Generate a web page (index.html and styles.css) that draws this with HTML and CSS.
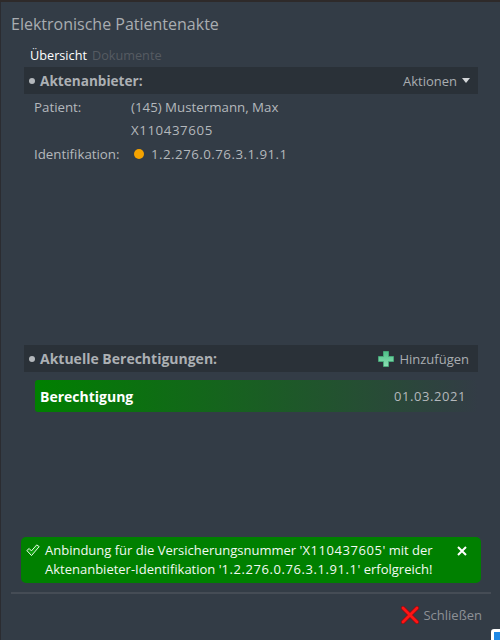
FILE: index.html
```html
<!DOCTYPE html>
<html lang="de">
<head>
<meta charset="utf-8">
<title>Elektronische Patientenakte</title>
<link rel="stylesheet" href="styles.css">
</head>
<body>
<div class="dialog">
  <h1 class="title">Elektronische Patientenakte</h1>
  <div class="tabs"><span class="tab active">Übersicht</span><span class="tab">Dokumente</span></div>
  <div class="section-bar">
    <span class="section-title"><i class="bullet"></i>Aktenanbieter:</span>
    <span class="action">Aktionen<i class="caret"></i></span>
  </div>
  <div class="info">
    <span class="label">Patient:</span><span>(145) Mustermann, Max</span>
    <span></span><span class="num">X110437605</span>
    <span class="label">Identifikation:</span><span class="ident"><i class="dot"></i><span class="num tight">1.2.276.0.76.3.1.91.1</span></span>
  </div>
  <div class="section-bar second">
    <span class="section-title wide"><i class="bullet"></i>Aktuelle Berechtigungen:</span>
    <span class="action add">
      <svg class="plus" viewBox="0 0 16 16" width="16" height="16"><defs><linearGradient id="plusfill" x1="0" y1="0" x2="0" y2="1"><stop offset="0" stop-color="#4fc088"/><stop offset="1" stop-color="#8ce0b4"/></linearGradient></defs><path d="M5.500 .5h5v5h5v5h-5v5h-5v-5h-5v-5h5z" fill="url(#plusfill)" stroke="#46b07c" stroke-width=".8"/></svg>
      Hinzufügen</span>
  </div>
  <div class="grant"><strong>Berechtigung</strong><span class="grant-date num">01.03.2021</span></div>
  <div class="notice">
    <svg class="check" viewBox="0 0 14 12" width="14" height="12"><path d="M.8 6.500l2.400-2 2.200 2.400 5.300-6 2.500 1.700-7.700 9z" fill="#0da00d" stroke="#e6fae6" stroke-width="1"/></svg>
    <p>Anbindung für die Versicherungsnummer '<span class="num">X110437605</span>' mit der<br>Aktenanbieter-Identifikation '<span class="num">1.2.276.0.76.3.1.91.1</span>' erfolgreich!</p>
    <svg class="close" viewBox="0 0 10 10" width="10" height="10"><path d="M1 1l8 8M9 1l-8 8" stroke="#fff" stroke-width="2"/></svg>
  </div>
  <div class="rule"></div>
  <div class="footer">
    <svg class="cross" viewBox="0 0 18 18" width="18" height="18"><path d="M2 2l14 14M16 2L2 16" stroke="#8a1016" stroke-width="4.400" stroke-linecap="round"/><path d="M2 2l14 14M16 2L2 16" stroke="#ff1414" stroke-width="2.800" stroke-linecap="round"/></svg>
    <span>Schließen</span>
  </div>
  <div class="corner-badge"></div>
</div>
</body>
</html>
```
FILE: styles.css
```css
* { box-sizing: border-box; }
html, body { margin: 0; height: 100%; }
body { background: #333b45; overflow: hidden; }
i { display: inline-block; }
.dialog {
  position: relative;
  width: 500px; height: 640px;
  padding: 2px 0 0;
  background:
    linear-gradient(#2e2a2a 0 2px, transparent 2px),
    linear-gradient(90deg, #2b2c31 0 1px, transparent 1px),
    #333c46;
  font-family: "Open Sans", sans-serif;
  font-size: 13px;
  color: #b4b8bc;
  display: flex; flex-direction: column;
}
.num { letter-spacing: .57px; }
.num.tight { letter-spacing: .47px; }
.title { margin: 11px 0 0 11px; font-size: 16px; line-height: 22px; font-weight: 400; color: #a9adb1; }
.tabs { margin: 11px 0 0 30px; display: flex; gap: 5px; line-height: 18px; font-size: 12.700px; height: 18px; }
.tab { color: #565b62; }
.tab.active { color: #fff; }
.section-bar {
  margin: 3px 22px 0 24px; height: 27px; padding: 0 8px 0 5px;
  background: #2a3138;
  display: flex; justify-content: space-between; align-items: center;
}
.section-bar.second { margin-top: 180px; }
.section-title { font-weight: 700; font-size: 13.600px; color: #acb0b4; display: flex; align-items: center; }
.section-title.wide { font-size: 14px; }
.bullet { width: 6px; height: 6px; border-radius: 50%; background: #b4b8bc; margin-right: 5px; margin-top: 1px; }
.action { display: flex; align-items: center; color: #a9adb1; }
.caret { margin-left: 5px; border: 4px solid transparent; border-top: 5px solid #d4d6d8; border-bottom: 0; }
.add { gap: 5px; padding-right: 1px; }
.info {
  margin: 1px 0 0 34px; display: grid; grid-template-columns: 97px auto; justify-content: start;
  grid-template-rows: 23px 24px 23px; align-items: center; font-size: 13.300px;
}
.ident { display: flex; align-items: center; margin-left: 3px; }
.dot { width: 10px; height: 10px; border-radius: 50%; background: #f5a300; margin-right: 7px; }
.grant {
  margin: 8px 22px 0 35px; height: 32px; padding: 0 12px 0 5px; border-radius: 3px;
  background: linear-gradient(90deg, #008000, #333c46);
  display: flex; justify-content: space-between; align-items: center;
}
.grant strong { color: #fff; font-size: 14px; }
.grant-date { color: #b4b8bc; font-size: 13px; }
.notice {
  margin: 125px 19px 0 21px; height: 46px; padding: 4px 14px 0 5px; border-radius: 5px;
  background: #008000; color: #f2f9f2;
  display: flex; align-items: flex-start;
}
.notice p { margin: 0; flex: 1; font-size: 13px; line-height: 19px; margin-left: 5px; }
.check { margin-top: 3px; flex: none; }
.close { margin-top: 5px; flex: none; }
.rule { margin: 9px 9px 0 11px; height: 2px; background: #454c55; }
.footer { margin: 12px 18px 0 0; display: flex; justify-content: flex-end; align-items: center; gap: 4px; color: #8d9196; }
.corner-badge {
  position: absolute; left: 491px; top: 629px; width: 14px; height: 14px;
  border: 3px solid #fff; border-radius: 3px; background: #1e88e5;
}
```
